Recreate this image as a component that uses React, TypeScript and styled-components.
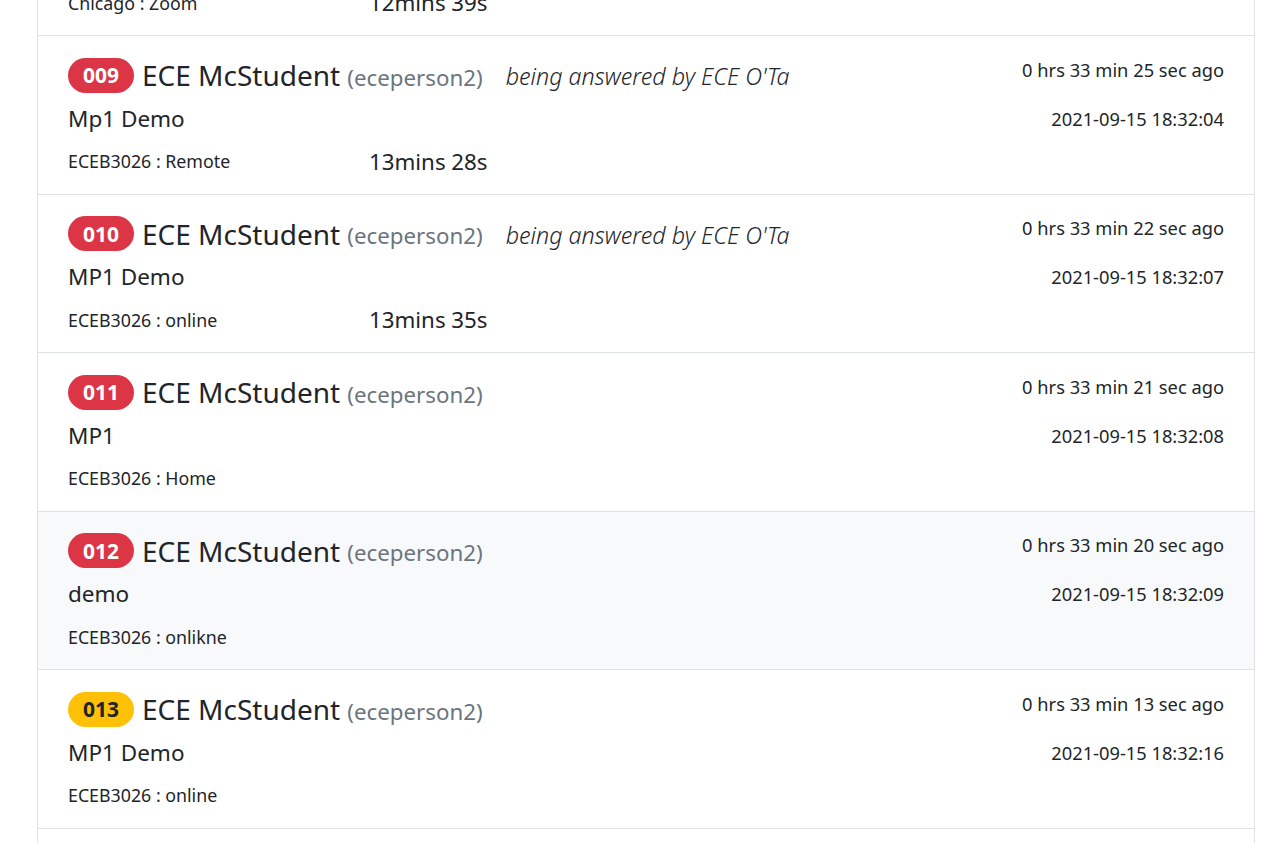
import React from "react";
import styled, { createGlobalStyle } from "styled-components";

const Global = createGlobalStyle`
  html, body { margin: 0; padding: 0; background: #fff; }
  body {
    font-family: "Noto Sans", "Open Sans", sans-serif;
    color: #212529;
    overflow: hidden;
  }
`;

const Page = styled.div`
  padding-left: 37px;
  width: 1218px;
  margin-top: -122.5px;
`;

const List = styled.div`
  display: flex;
  flex-direction: column;
  border-left: 1px solid #dee2e6;
  border-right: 1px solid #dee2e6;
`;

const Item = styled.div<{ $light?: boolean }>`
  display: flex;
  justify-content: space-between;
  height: 158.5px;
  box-sizing: border-box;
  padding: 17.5px 30px 0 30px;
  border-bottom: 1px solid #dee2e6;
  background: ${(p) => (p.$light ? "#f8f9fa" : "#fff")};
`;

const Left = styled.div`
  display: flex;
  flex-direction: column;
`;

const Row = styled.div`
  height: 43px;
  display: flex;
  align-items: center;
`;

const Badge = styled.span<{ $warn?: boolean }>`
  display: inline-flex;
  align-items: center;
  justify-content: center;
  box-sizing: border-box;
  width: 66px;
  height: 35px;
  border-radius: 18px;
  font-size: 21px;
  font-weight: 700;
  background: ${(p) => (p.$warn ? "#ffc107" : "#dc3545")};
  color: ${(p) => (p.$warn ? "#212529" : "#fff")};
  margin-right: 8px;
`;

const Name = styled.span`
  font-size: 28px;
  font-weight: 400;
  line-height: 1;
`;

const NetId = styled.span`
  font-size: 22.3px;
  color: #6c757d;
  margin-left: 7px;
  margin-top: 4px;
`;

const Answering = styled.span`
  font-size: 23.3px;
  font-style: italic;
  font-weight: 300;
  margin-left: 23px;
  margin-top: 2px;
`;

const Question = styled.span`
  font-size: 22.5px;
`;

const InfoGrid = styled.div`
  display: grid;
  grid-template-columns: 301px auto;
  align-items: center;
  height: 43px;
`;

const Location = styled.span`
  font-size: 17.8px;
`;

const Timer = styled.span`
  font-size: 22.3px;
`;

const Right = styled.div`
  display: flex;
  flex-direction: column;
  align-items: flex-end;
  gap: 17px;
`;

const Meta = styled.span`
  font-size: 18.3px;
  line-height: 32px;
`;

type Q = {
  id: string;
  netid: string;
  answeredBy?: string;
  question: string;
  location: string;
  timer?: string;
  ago: string;
  date: string;
  warn?: boolean;
  light?: boolean;
};

const data: Q[] = [
  { id: "008", netid: "eceperson2", answeredBy: "ECE O'Ta", question: "MP1 Demo", location: "Chicago : Zoom", timer: "12mins 39s", ago: "0 hrs 33 min 31 sec ago", date: "2021-09-15 18:31:58" },
  { id: "009", netid: "eceperson2", answeredBy: "ECE O'Ta", question: "Mp1 Demo", location: "ECEB3026 : Remote", timer: "13mins 28s", ago: "0 hrs 33 min 25 sec ago", date: "2021-09-15 18:32:04" },
  { id: "010", netid: "eceperson2", answeredBy: "ECE O'Ta", question: "MP1 Demo", location: "ECEB3026 : online", timer: "13mins 35s", ago: "0 hrs 33 min 22 sec ago", date: "2021-09-15 18:32:07" },
  { id: "011", netid: "eceperson2", question: "MP1", location: "ECEB3026 : Home", ago: "0 hrs 33 min 21 sec ago", date: "2021-09-15 18:32:08" },
  { id: "012", netid: "eceperson2", question: "demo", location: "ECEB3026 : onlikne", ago: "0 hrs 33 min 20 sec ago", date: "2021-09-15 18:32:09", light: true },
  { id: "013", netid: "eceperson2", question: "MP1 Demo", location: "ECEB3026 : online", ago: "0 hrs 33 min 13 sec ago", date: "2021-09-15 18:32:16", warn: true },
  { id: "014", netid: "eceperson2", question: "MP1", location: "ECEB3026 : online", ago: "0 hrs 33 min 10 sec ago", date: "2021-09-15 18:32:19", warn: true },
];

export default function App() {
  return (
    <>
      <Global />
      <Page>
        <List>
          {data.map((q) => (
            <Item key={q.id} $light={q.light}>
              <Left>
                <Row>
                  <Badge $warn={q.warn}>{q.id}</Badge>
                  <Name>ECE McStudent</Name>
                  <NetId>({q.netid})</NetId>
                  {q.answeredBy && <Answering>being answered by {q.answeredBy}</Answering>}
                </Row>
                <Row>
                  <Question>{q.question}</Question>
                </Row>
                <InfoGrid>
                  <Location>{q.location}</Location>
                  {q.timer && <Timer>{q.timer}</Timer>}
                </InfoGrid>
              </Left>
              <Right>
                <Meta>{q.ago}</Meta>
                <Meta>{q.date}</Meta>
              </Right>
            </Item>
          ))}
        </List>
      </Page>
    </>
  );
}
